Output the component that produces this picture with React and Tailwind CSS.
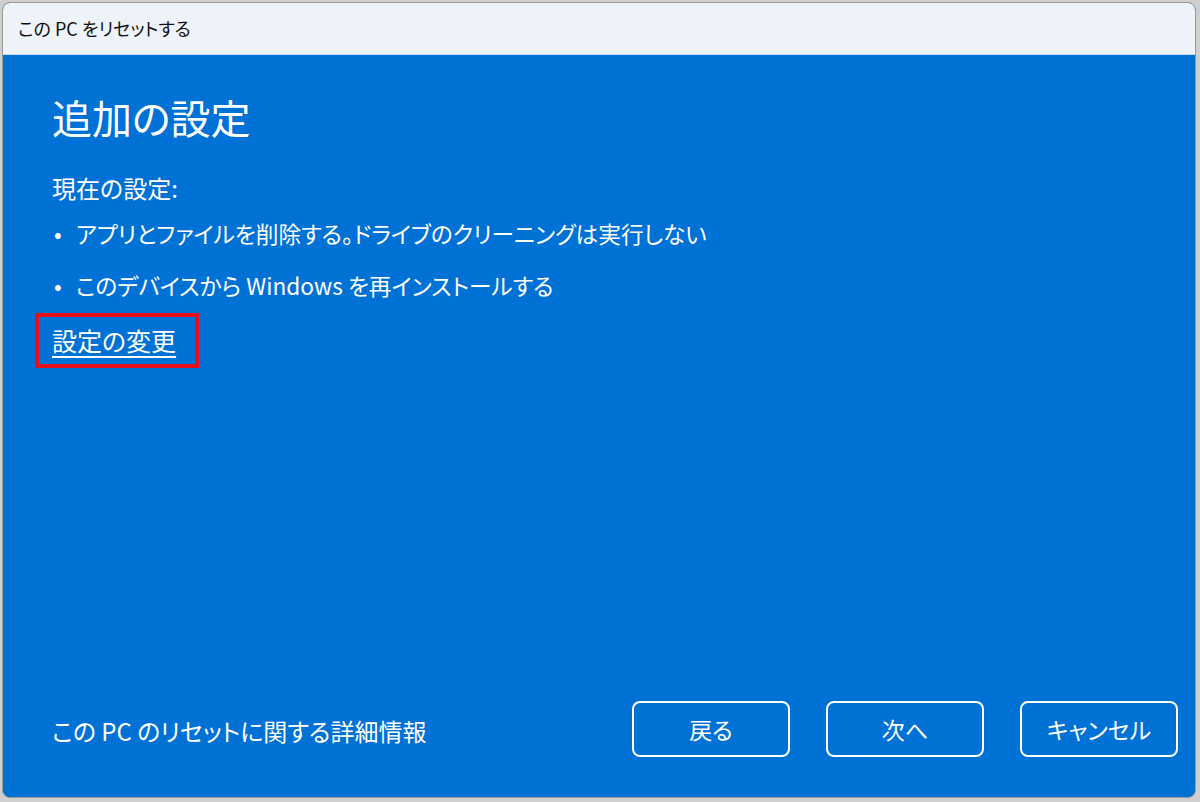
const font = "[font-family:'Noto_Sans_CJK_JP','Noto_Sans',sans-serif] [font-feature-settings:'palt']";

const DialogButton = ({ children }) => (
  <button className="h-[56px] w-[158px] rounded-[8px] border-2 border-white text-[23px] text-white">
    {children}
  </button>
);

const App = () => {
  return (
    <div className={`h-[802px] w-[1200px] bg-[#cfcfcf] p-[2px] pr-[4px] pb-[4px] ${font}`}>
      <div className="flex h-full flex-col overflow-hidden rounded-[8px] border border-[#9a9a9a] bg-[#0071d5]">
        <div className="flex h-[52px] items-center border-b border-[#c9d6ea] bg-[#eef2f9] px-[15px] text-[18px] text-[#111]">
          この PC をリセットする
        </div>

        <div className="flex flex-1 flex-col pr-[17px] pl-[49px] text-white">
          <h1 className="mt-[32px] text-[40px] leading-[60px] font-normal">追加の設定</h1>

          <p className="mt-[25px] text-[24px] leading-[32px]">現在の設定:</p>
          <ul className="mt-[14px] flex flex-col gap-[20px] text-[22.7px] leading-[32px]">
            <li className="flex gap-[14px] pl-[2px]">
              <span>•</span>
              <span>アプリとファイルを削除する。ドライブのクリーニングは実行しない</span>
            </li>
            <li className="flex gap-[14px] pl-[2px]">
              <span>•</span>
              <span>このデバイスから Windows を再インストールする</span>
            </li>
          </ul>

          <div className="mt-[11px] -ml-[17px] self-start border-4 border-[#e60f1a] pt-[5px] pr-[19px] pb-[6px] pl-[13px]">
            <a href="#" className="text-[25px] leading-[36px] underline underline-offset-[5px] decoration-[1.5px]">
              設定の変更
            </a>
          </div>

          <div className="mt-auto mb-[40px] flex items-end justify-between">
            <span className="mb-[10px] text-[24px] leading-[32px]">この PC のリセットに関する詳細情報</span>
            <div className="flex gap-[36px]">
              <DialogButton>戻る</DialogButton>
              <DialogButton>次へ</DialogButton>
              <DialogButton>キャンセル</DialogButton>
            </div>
          </div>
        </div>
      </div>
    </div>
  );
};

export default App;
